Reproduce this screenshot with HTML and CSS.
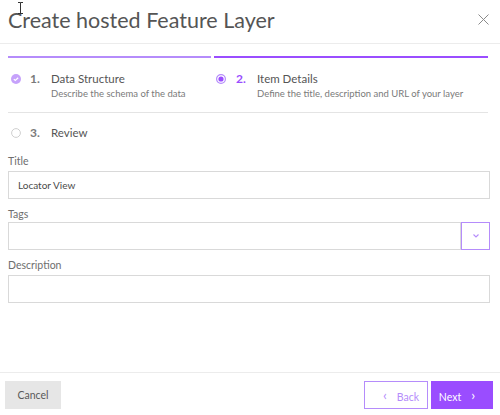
FILE: index.html
```html
<!DOCTYPE html>
<html lang="en">
<head>
    <meta charset="UTF-8">
    <meta name="viewport" content="width=device-width, initial-scale=1.0">
    <title>Create hosted Feature Layer</title>
    <link rel="stylesheet" href="styles.css">
</head>
<body>
    <div class="dialog">
        <div class="header">
            <h1>Create hosted Feature Layer</h1>
            <button class="close" aria-label="Close">
                <svg width="11" height="11" viewBox="0 0 11 11"><path d="M0.5 0.5L10.5 10.5M10.5 0.5L0.5 10.5" stroke="#8a8a8a" stroke-width="1" fill="none"/></svg>
            </button>
        </div>

        <div class="steps">
            <div class="step-row">
                <div class="step done">
                    <span class="step-icon">
                        <svg width="10" height="10" viewBox="0 0 10 10"><circle cx="5" cy="5" r="5" fill="#c6a2fb"/><path d="M2.8 5.1L4.3 6.5L7.2 3.7" stroke="#fff" stroke-width="1.2" fill="none"/></svg>
                    </span>
                    <span class="step-num">1.</span>
                    <div class="step-text">
                        <div class="step-title">Data Structure</div>
                        <div class="step-desc">Describe the schema of the data</div>
                    </div>
                </div>
                <div class="step active">
                    <span class="step-icon">
                        <svg width="10" height="10" viewBox="0 0 10 10"><circle cx="5" cy="5" r="4.4" fill="#fff" stroke="#b58cfb" stroke-width="1.2"/><circle cx="5" cy="5" r="2.6" fill="#9a4dff"/></svg>
                    </span>
                    <span class="step-num">2.</span>
                    <div class="step-text">
                        <div class="step-title">Item Details</div>
                        <div class="step-desc">Define the title, description and URL of your layer</div>
                    </div>
                </div>
            </div>
            <div class="step todo">
                <span class="step-icon">
                    <svg width="10" height="10" viewBox="0 0 10 10"><circle cx="5" cy="5" r="4.4" fill="#fff" stroke="#cfcfcf" stroke-width="1"/></svg>
                </span>
                <span class="step-num">3.</span>
                <div class="step-text">
                    <div class="step-title">Review</div>
                </div>
            </div>
        </div>

        <div class="form">
            <div class="field">
                <label>Title</label>
                <div class="input">Locator View</div>
            </div>
            <div class="field tags">
                <label>Tags</label>
                <div class="combo">
                    <div class="input"></div>
                    <button class="combo-btn" aria-label="Open">
                        <svg width="8" height="6" viewBox="0 0 8 6"><path d="M1.5 1.5L4 4L6.5 1.5" stroke="#b58cfb" stroke-width="1.1" fill="none"/></svg>
                    </button>
                </div>
            </div>
            <div class="field">
                <label>Description</label>
                <div class="input"></div>
            </div>
        </div>

        <div class="footer">
            <button class="btn btn-cancel">Cancel</button>
            <div class="nav">
                <button class="btn btn-back"><span class="chev">&lsaquo;</span>Back</button>
                <button class="btn btn-next">Next<span class="chev">&rsaquo;</span></button>
            </div>
        </div>

        <svg class="cursor" width="7" height="12" viewBox="0 0 7 12"><path d="M1 0.5H3.5M3.5 0.5H6M3.5 0.5V11.5M1 11.5H6" stroke="#333" stroke-width="1" fill="none"/></svg>
    </div>
</body>
</html>
```

FILE: styles.css
```css
body {
    margin: 0;
    font-family: Lato, "Open Sans", sans-serif;
    color: #4a4a4a;
    background: #fff;
}
.dialog {
    position: relative;
    width: 500px;
    height: 415px;
    display: flex;
    flex-direction: column;
}
.header {
    height: 44px;
    border-bottom: 1px solid #ececec;
    display: flex;
    align-items: center;
    justify-content: space-between;
    padding: 0 11px 4px 8px;
    box-sizing: border-box;
}
.header h1 {
    margin: 0;
    font-size: 21.5px;
    font-weight: 400;
    color: #555;
}
.close {
    background: none;
    border: none;
    padding: 0;
    width: 11px;
    height: 11px;
    display: flex;
    cursor: pointer;
}
.steps {
    margin-top: 12px;
    padding: 0 12px 0 8px;
}
.step-row {
    display: grid;
    grid-template-columns: 203px 274px;
    gap: 3px;
    border-bottom: 1px solid #e4e4e4;
}
.step {
    display: flex;
    align-items: flex-start;
    padding: 13px 0 12px 3px;
}
.step-row .step {
    border-top: 2px solid #9a4dff;
}
.step-row .step.done {
    border-top-color: #b58cfb;
}
.step.active {
    padding-left: 2px;
}
.step-icon {
    width: 10px;
    height: 16px;
    display: flex;
    align-items: center;
}
.step-num {
    width: 21px;
    margin-left: 9px;
    font-size: 12px;
    line-height: 16px;
    font-weight: 700;
    color: #7a7a7a;
}
.step.active .step-num {
    color: #9a4dff;
    margin-left: 10px;
}
.step-title {
    font-size: 11.5px;
    line-height: 16px;
    color: #555;
}
.step-desc {
    font-size: 9.5px;
    line-height: 13px;
    color: #7a7a7a;
    white-space: nowrap;
}
.step.todo {
    padding-top: 12px;
}
.form {
    padding: 1px 10px 0 8px;
}
.field {
    margin-bottom: 8px;
}
.field label {
    display: block;
    font-size: 10.5px;
    line-height: 14px;
    margin-bottom: 3px;
    color: #6e6e6e;
}
.field.tags label {
    margin-bottom: 1px;
}
.input {
    height: 28px;
    box-sizing: border-box;
    border: 1px solid #d9d9d9;
    padding: 0 9px;
    font-size: 10px;
    line-height: 26px;
    color: #4a4a4a;
}
.combo {
    display: flex;
}
.combo .input {
    flex: 1;
}
.combo-btn {
    width: 29px;
    height: 28px;
    box-sizing: border-box;
    border: 1.5px solid #b58cfb;
    background: #fff;
    padding: 0;
    display: flex;
    align-items: center;
    justify-content: center;
}
.footer {
    margin-top: auto;
    height: 43px;
    border-top: 1px solid #ececec;
    display: flex;
    justify-content: space-between;
    padding: 8px 7px 0 5px;
    box-sizing: border-box;
}
.nav {
    display: flex;
    gap: 3px;
}
.btn {
    height: 28px;
    font-family: inherit;
    font-size: 10.5px;
    border: none;
    padding: 0;
    cursor: pointer;
}
.btn-cancel {
    width: 56px;
    background: #e6e6e6;
    color: #595959;
}
.btn-back {
    width: 64px;
    background: #fff;
    border: 1px solid #b58cfb;
    color: #b58cfb;
}
.btn-next {
    width: 62px;
    background: #9a4dff;
    color: #fff;
}
.chev {
    font-size: 14px;
    margin: 0 10px;
    position: relative;
    top: -1px;
}
.cursor {
    position: absolute;
    left: 17px;
    top: 2px;
}
```
